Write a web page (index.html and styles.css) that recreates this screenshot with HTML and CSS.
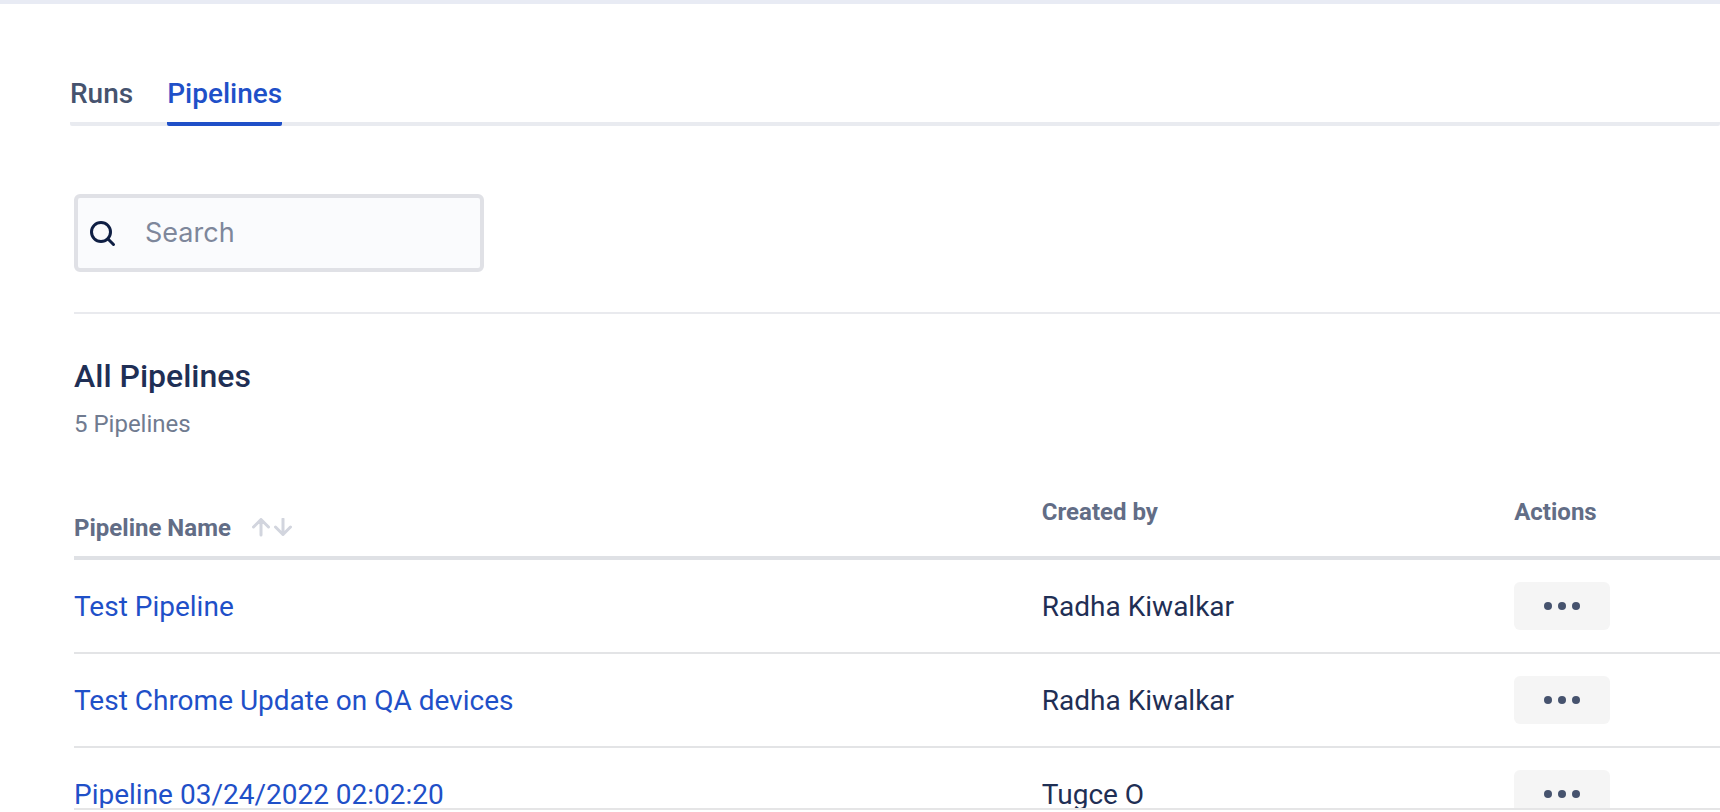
FILE: index.html
```html
<!DOCTYPE html>
<html lang="en">
<head>
<meta charset="utf-8">
<meta name="viewport" content="width=device-width, initial-scale=1">
<title>Pipelines</title>
<link rel="stylesheet" href="styles.css">
</head>
<body>
<div class="page">
  <nav class="tabs" aria-label="Sections">
    <a class="tab" href="#runs">Runs</a>
    <a class="tab tab-active" href="#pipelines" aria-current="page">Pipelines</a>
  </nav>
  <main class="content">
    <div class="toolbar">
      <label class="search">
        <svg class="search-icon" viewBox="0 0 28 28" aria-hidden="true"><circle cx="12" cy="13" r="9.5"/><path d="M18.800 19.800l5.700 5.700"/></svg>
        <input class="search-input" type="search" placeholder="Search" aria-label="Search">
      </label>
    </div>
    <header class="heading">
      <h1 class="title">All Pipelines</h1>
      <p class="count">5 Pipelines</p>
    </header>
    <div class="list">
      <table class="table">
        <thead>
          <tr>
            <th class="col-name" scope="col">
              <span class="sortable">Pipeline Name
                <button class="sort" type="button" aria-label="Sort by pipeline name">
                  <svg class="sort-icon" viewBox="0 0 42 20" aria-hidden="true"><path d="M10 17V1.500M2.500 9L10 1.500l7.500 7.500M32 1v15.500M24.500 9L32 16.500l7.500-7.500"/></svg>
                </button>
              </span>
            </th>
            <th class="col-creator" scope="col">Created by</th>
            <th class="col-actions" scope="col">Actions</th>
          </tr>
        </thead>
        <tbody>
          <tr>
            <td><a class="link" href="#p1">Test Pipeline</a></td>
            <td>Radha Kiwalkar</td>
            <td class="cell-actions"><button class="more" type="button" aria-label="Actions for Test Pipeline"><span class="dot"></span><span class="dot"></span><span class="dot"></span></button></td>
          </tr>
          <tr>
            <td><a class="link" href="#p2">Test Chrome Update on QA devices</a></td>
            <td>Radha Kiwalkar</td>
            <td class="cell-actions"><button class="more" type="button" aria-label="Actions for Test Chrome Update on QA devices"><span class="dot"></span><span class="dot"></span><span class="dot"></span></button></td>
          </tr>
          <tr>
            <td><a class="link" href="#p3">Pipeline 03/24/2022 02:02:20</a></td>
            <td>Tugce O</td>
            <td class="cell-actions"><button class="more" type="button" aria-label="Actions for Pipeline 03/24/2022 02:02:20"><span class="dot"></span><span class="dot"></span><span class="dot"></span></button></td>
          </tr>
        </tbody>
      </table>
    </div>
  </main>
</div>
</body>
</html>
```
FILE: styles.css
```css
* {
  box-sizing: border-box;
}

body {
  margin: 0;
  background: #fff;
  color: #1f2f55;
  font-family: Roboto, "Liberation Sans", sans-serif;
  font-size: 28px;
  line-height: 36px;
}

.page {
  display: flex;
  flex-direction: column;
  height: 100vh;
  overflow: hidden;
  border-top: 4px solid #e8ebf4;
}

.tabs {
  display: flex;
  flex: none;
  gap: 34px;
  margin-left: 70px;
  padding-top: 72px;
  background: linear-gradient(#e9ebf0, #e9ebf0) bottom / 100% 4px no-repeat;
  border-radius: 2px;
}

.tab {
  padding-bottom: 14px;
  color: #46536e;
  font-weight: 500;
  text-decoration: none;
}

.tab-active {
  color: #1f50c8;
  background: linear-gradient(#1f50c8, #1f50c8) bottom / 100% 4px no-repeat;
  border-radius: 2px;
}

.content {
  display: flex;
  flex: 1;
  flex-direction: column;
  min-height: 0;
  padding-bottom: 2px;
  padding-left: 74px;
}

.toolbar {
  flex: none;
  padding: 68px 0 40px;
  border-bottom: 2px solid #e9eaee;
}

.search {
  display: flex;
  align-items: center;
  gap: 28px;
  width: 410px;
  height: 78px;
  padding: 0 11px;
  border: 4px solid #e0e1e6;
  border-radius: 6px;
  background: #fafbfd;
}

.search-icon {
  flex: none;
  width: 28px;
  height: 28px;
  fill: none;
  stroke: #0f1f44;
  stroke-width: 3;
  stroke-linecap: round;
}

.search-input {
  flex: 1;
  min-width: 0;
  padding: 0;
  border: 0;
  outline: 0;
  background: none;
  color: #1f2f55;
  font-family: Inter, "Liberation Sans", sans-serif;
  font-size: 27px;
  line-height: 36px;
}

.search-input::placeholder {
  color: #7e879b;
  opacity: 1;
}

.heading {
  flex: none;
  padding: 42px 0 56px;
}

.title {
  margin: 0 0 14px;
  font-size: 32px;
  font-weight: 500;
  line-height: 40px;
}

.count {
  margin: 0;
  color: #707b90;
  font-size: 24px;
  line-height: 28px;
}

.list {
  flex: 1;
  min-height: 0;
  overflow: hidden;
  border-bottom: 2px solid #e5e5e6;
}

.table {
  width: 100%;
  table-layout: fixed;
  border-collapse: separate;
  border-spacing: 0;
}

th {
  height: 66px;
  padding: 0 0 26px;
  border-bottom: 4px solid #dfe1e5;
  color: #626d86;
  font-size: 24px;
  font-weight: 700;
  line-height: 36px;
  text-align: left;
  white-space: nowrap;
}

.col-name {
  width: 58.8%;
  padding-bottom: 10px;
  vertical-align: bottom;
}

.col-creator {
  width: 28.7%;
}

.col-actions {
  width: 12.5%;
}

.sortable {
  display: flex;
  align-items: center;
  gap: 20px;
}

.sort {
  display: flex;
  padding: 0;
  border: 0;
  background: none;
  cursor: pointer;
}

.sort-icon {
  width: 42px;
  height: 20px;
  fill: none;
  stroke: #d2d5de;
  stroke-width: 3;
  stroke-linecap: round;
  stroke-linejoin: round;
}

td {
  height: 94px;
  padding: 2px 0 0;
  border-bottom: 2px solid #e3e4e6;
}

.cell-actions {
  padding: 0;
}

.link {
  color: #1f50c8;
  text-decoration: none;
}

.more {
  display: flex;
  align-items: center;
  justify-content: center;
  gap: 6px;
  width: 96px;
  height: 48px;
  padding: 0;
  border: 0;
  border-radius: 6px;
  background: #f5f5f5;
  cursor: pointer;
}

.dot {
  width: 8px;
  height: 8px;
  border-radius: 50%;
  background: #46536e;
}
```
